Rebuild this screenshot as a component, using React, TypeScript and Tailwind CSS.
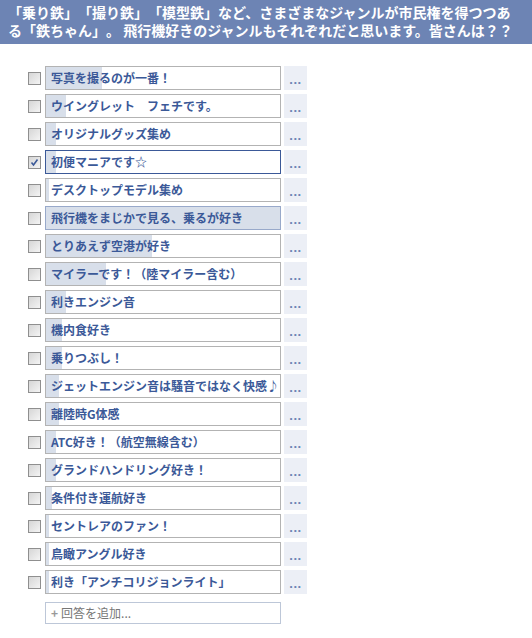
import React from 'react';

interface Option {
  text: string;
  fill: number; // px of the vote bar
  checked?: boolean;
}

const options: Option[] = [
  { text: '写真を撮るのが一番！', fill: 56 },
  { text: 'ウイングレット　フェチです。', fill: 20 },
  { text: 'オリジナルグッズ集め', fill: 10 },
  { text: '初便マニアです☆', fill: 10, checked: true },
  { text: 'デスクトップモデル集め', fill: 3 },
  { text: '飛行機をまじかで見る、乗るが好き', fill: 234 },
  { text: 'とりあえず空港が好き', fill: 106 },
  { text: 'マイラーです！（陸マイラー含む）', fill: 60 },
  { text: '利きエンジン音', fill: 20 },
  { text: '機内食好き', fill: 16 },
  { text: '乗りつぶし！', fill: 16 },
  { text: 'ジェットエンジン音は騒音ではなく快感♪', fill: 13 },
  { text: '離陸時G体感', fill: 13 },
  { text: 'ATC好き！（航空無線含む）', fill: 10 },
  { text: 'グランドハンドリング好き！', fill: 10 },
  { text: '条件付き運航好き', fill: 6 },
  { text: 'セントレアのファン！', fill: 3 },
  { text: '鳥瞰アングル好き', fill: 3 },
  { text: '利き「アンチコリジョンライト」', fill: 3 },
];

export default function App() {
  return (
    <div className="w-[532px] h-[638px] bg-white font-['Noto_Sans_CJK_JP','Noto_Sans',sans-serif] [text-spacing-trim:space-all]">
      <div className="bg-[#6d84b4] h-[44px] px-2 pt-[3px] text-[14px] leading-[18px] font-bold text-white">
        「乗り鉄」「撮り鉄」「模型鉄」など、さまざまなジャンルが市民権を得つつある「鉄ちゃん」。 飛行機好きのジャンルもそれぞれだと思います。皆さんは？？
      </div>

      <ul className="pt-[22px] flex flex-col gap-[4px]">
        {options.map(opt => (
          <OptionRow key={opt.text} option={opt} />
        ))}
      </ul>

      <div className="ml-[45px] mt-[8px] w-[236px] h-[22px] border border-[#bdc7d8] flex items-center px-[5px] gap-[3px] text-[12px] text-[#777]">
        <span className="text-[#999] font-bold text-[12px]">+</span>
        <span>回答を追加...</span>
      </div>
    </div>
  );
}

function OptionRow({ option }: { option: Option }) {
  const full = option.fill >= 234;
  const border = option.checked ? 'border-[#3b5998]' : full ? 'border-[#98a9ca]' : 'border-[#b3b3b3]';
  return (
    <li className="flex items-center h-[24px]">
      <div className="w-[45px] flex justify-end pr-[4px]">
        <span className="w-[13px] h-[13px] border border-[#8f8f8f] bg-gradient-to-br from-[#d6d6d6] to-[#f4f4f4] flex items-center justify-center">
          {option.checked && (
            <svg width="9" height="9" viewBox="0 0 9 9">
              <path d="M1.5 4.5 L3.5 7 L7.5 1.5" stroke="#3b5998" strokeWidth="1.6" fill="none" />
            </svg>
          )}
        </span>
      </div>
      <div className={`relative w-[236px] h-[24px] border ${border} bg-white overflow-hidden`}>
        <div className="absolute left-0 top-0 bottom-0 bg-[#d8dfea]" style={{ width: option.fill }} />
        <div className="relative h-full flex items-center pl-[5px] text-[12px] font-bold text-[#3b5998] whitespace-nowrap">
          {option.text}
        </div>
      </div>
      <div className="ml-[3px] w-[23px] h-[24px] bg-[#eceff6] flex items-center justify-center pt-[2px] text-[13px] font-bold tracking-[0.5px] text-[#6d84b4] leading-none font-['Liberation_Sans',sans-serif]">
        ...
      </div>
    </li>
  );
}
